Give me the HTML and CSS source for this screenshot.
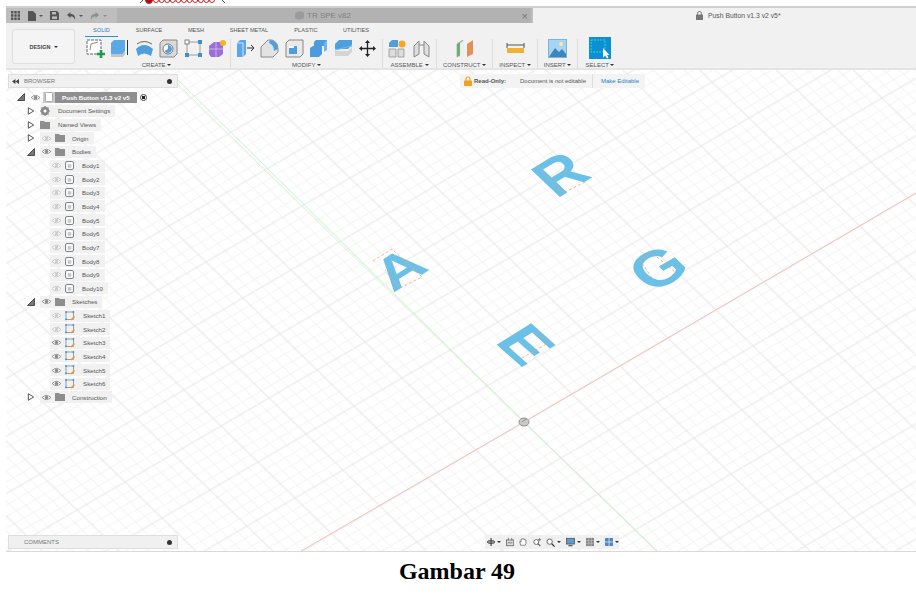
FILE: index.html
```html
<!DOCTYPE html>
<html lang="id">
<head>
<meta charset="utf-8">
<title>Gambar 49</title>
<link rel="stylesheet" href="styles.css">
</head>
<body>
<svg width="0" height="0" class="defs">
  <symbol id="eye" viewBox="0 0 12 8"><path d="M1 4Q6 -1 11 4Q6 9 1 4Z" fill="#fff" stroke="#8a8a8a" stroke-width="1"/><circle cx="6" cy="4" r="2" fill="#8a8a8a"/></symbol>
  <symbol id="eyeoff" viewBox="0 0 12 8"><path d="M1 4Q6 -1 11 4Q6 9 1 4Z" fill="#fff" stroke="#c4c4c4" stroke-width="1"/><circle cx="6" cy="4" r="2" fill="#cfcfcf"/><path d="M4 7L8 1" stroke="#c4c4c4" stroke-width=".8"/></symbol>
  <symbol id="folder" viewBox="0 0 10 8"><path d="M0 0H4L5 1H10V8H0Z" fill="#8e8e8e"/></symbol>
  <symbol id="body" viewBox="0 0 10 10"><rect x=".6" y=".6" width="8.8" height="8.8" rx="1.5" fill="#fff" stroke="#6d7075"/><rect x="3" y="3.5" width="4" height="4" fill="#c3c9cf"/></symbol>
  <symbol id="sketch" viewBox="0 0 10 10"><rect x="1" y="1" width="7.5" height="7.5" fill="none" stroke="#6f7c8a" stroke-width=".7"/><rect x=".2" y=".2" width="1.6" height="1.6" fill="#3e8ed0"/><rect x="7.6" y=".2" width="1.6" height="1.6" fill="#3e8ed0"/><rect x=".2" y="7.6" width="1.6" height="1.6" fill="#3e8ed0"/><path d="M6 9L9.5 5.5" stroke="#ef9a2e" stroke-width="1.4"/></symbol>
  <symbol id="tri" viewBox="0 0 8 9"><path d="M1 .8L7 4.5L1 8.2Z" fill="#fff" stroke="#444" stroke-width="1"/></symbol>
  <symbol id="triopen" viewBox="0 0 8 8"><path d="M7.5 .5V7.5H.5Z" fill="#777" stroke="#333" stroke-width=".8"/></symbol>
</svg>

<div class="scrap"><svg width="100" height="5" viewBox="0 0 100 5"><g fill="none" stroke="#c22" stroke-width="1"><path d="M13 0L10 3M92 0L95 3" stroke="#555"/><circle cx="19" cy="0" r="3.500" fill="#a11"/><circle cx="26" cy="0" r="2.500"/><circle cx="31.600" cy="0" r="2.500"/><circle cx="37.200" cy="0" r="2.500"/><circle cx="42.800" cy="0" r="2.500"/><circle cx="48.400" cy="0" r="2.500"/><circle cx="54" cy="0" r="2.500"/><circle cx="59.600" cy="0" r="2.500"/><circle cx="65.200" cy="0" r="2.500"/><circle cx="70.800" cy="0" r="2.500"/><circle cx="76.400" cy="0" r="2.500"/><circle cx="82" cy="0" r="2.500"/></g></svg></div>

<main class="app">
  <header class="tabbar">
    <div class="quick">
      <svg class="q" width="9" height="9" viewBox="0 0 9 9"><path d="M0 0h2.4v2.4H0zM3.3 0h2.4v2.4H3.3zM6.6 0H9v2.4H6.6zM0 3.3h2.4v2.4H0zM3.3 3.3h2.4v2.4H3.3zM6.6 3.3H9v2.4H6.6zM0 6.6h2.4V9H0zM3.3 6.6h2.4V9H3.3zM6.6 6.6H9V9H6.6z" fill="#555"/></svg>
      <svg class="q" width="16" height="10" viewBox="0 0 16 10"><path d="M1 0H6L9 3V10H1Z" fill="#555"/><path d="M12 4H16L14 6Z" fill="#555"/></svg>
      <svg class="q" width="9" height="9" viewBox="0 0 9 9"><path d="M0 0H7L9 2V9H0Z" fill="#555"/><rect x="2" y="1" width="4" height="2.4" fill="#bbb"/><rect x="2" y="5.4" width="5" height="2.6" fill="#bbb"/></svg>
      <svg class="q" width="17" height="10" viewBox="0 0 17 10"><path d="M1 4L4.5 1V3C8 3 9.500 5 9 9C8 6 7 5.200 4.500 5.200V7Z" fill="#555"/><path d="M13 4H17L15 6Z" fill="#555"/></svg>
      <svg class="q" width="17" height="10" viewBox="0 0 17 10"><path d="M9 4L5.500 1V3C2 3 .5 5 1 9C2 6 3 5.200 5.500 5.200V7Z" fill="#8c8c8c"/><path d="M13 4H17L15 6Z" fill="#8c8c8c"/></svg>
    </div>
    <div class="doc-tab">
      <svg width="9" height="9" viewBox="0 0 9 9"><path d="M0 2L5 0L9 1.500V7L4 9L0 7Z" fill="#9b9b9b"/></svg>
      <span class="doc-name">TR SPE v82</span>
      <span class="doc-close">×</span>
    </div>
    <div class="active-tab">
      <svg width="7" height="9" viewBox="0 0 7 9"><path d="M1.500 4V2.500A2 2 0 0 1 5.500 2.500V4" fill="none" stroke="#777"/><rect y="3.600" width="7" height="5.400" rx=".6" fill="#777"/></svg>
      <span>Push Button v1.3 v2 v5*</span>
    </div>
  </header>

  <section class="toolbar">
    <div class="design">DESIGN <i class="caret"></i></div>
    <div class="tools">
      <nav class="tabs">
        <span class="tab tab-solid">SOLID</span>
        <span class="tab tab-surface">SURFACE</span>
        <span class="tab tab-mesh">MESH</span>
        <span class="tab tab-sheet">SHEET METAL</span>
        <span class="tab tab-plastic">PLASTIC</span>
        <span class="tab tab-util">UTILITIES</span>
      </nav>
      <div class="groups">
        <div class="group g-create">
          <div class="icons">
            <svg width="19" height="19" viewBox="0 0 19 19"><rect x="1" y="1" width="14" height="14" fill="#fff" stroke="#666" stroke-dasharray="3 1"/><path d="M4 11L5 5L12 3" fill="none" stroke="#888"/><path d="M11 15H19M15 11V19" stroke="#1b9e4b" stroke-width="2.600"/></svg>
            <svg width="19" height="19" viewBox="0 0 19 19"><path d="M1 4L4 1H15V15L12 18H1Z" fill="#5aa9e6"/><path d="M1 15H12L15 12V15L12 18H1Z" fill="#c4c4c4"/><path d="M17.500 1V16" stroke="#333"/></svg>
            <svg width="19" height="19" viewBox="0 0 19 19"><path d="M1 10Q9 2 18 10L16 17Q9 12 3 17Z" fill="#4f9fdf"/><path d="M2 5Q9 0 17 5" fill="none" stroke="#666"/></svg>
            <svg width="19" height="19" viewBox="0 0 19 19"><path d="M1 4L4 1H18V15L15 18H1Z" fill="#d9d9d9" stroke="#888"/><circle cx="9" cy="10" r="5" fill="#fff" stroke="#777"/><path d="M9 10V6A4 4 0 1 1 5.500 12Z" fill="#4f9fdf"/></svg>
            <svg width="19" height="19" viewBox="0 0 19 19"><path d="M3 3H16M3 3V16M16 3V16M3 16H16" stroke="#777" stroke-width=".7"/><rect x="1" y="1" width="4" height="4" fill="#fff" stroke="#666" stroke-width=".8"/><rect x="14" y="1" width="4" height="4" fill="#3e8ed0"/><rect x="1" y="14" width="4" height="4" fill="#3e8ed0"/><rect x="14" y="14" width="4" height="4" fill="#3e8ed0"/></svg>
            <svg width="19" height="19" viewBox="0 0 19 19"><path d="M1 7L6 3H15V15L11 18H3L1 15Z" fill="#9a6fd8"/><path d="M8 3V18M1 10H15" stroke="#c9b2ee"/><circle cx="15" cy="4" r="3" fill="#f5b324"/></svg>
          </div>
          <div class="label">CREATE <i class="caret"></i></div>
        </div>
        <div class="group g-modify">
          <div class="icons">
            <svg width="19" height="19" viewBox="0 0 19 19"><path d="M1 4L4 1H10V15L7 18H1Z" fill="#5aa9e6"/><path d="M1 4H7V18" fill="none" stroke="#dde" /><path d="M11 9H18M15 6L18 9L15 12" fill="none" stroke="#333"/></svg>
            <svg width="19" height="19" viewBox="0 0 19 19"><path d="M1 8L8 1H12Q18 3 18 10V13L13 18H1Z" fill="#e3e3e3" stroke="#8a8a8a"/><path d="M10 1Q18 2 18 10L14 12Q14 6 9 4Z" fill="#4f9fdf"/></svg>
            <svg width="19" height="19" viewBox="0 0 19 19"><path d="M1 4L4 1H18V15L15 18H1Z" fill="#e9e9e9" stroke="#888"/><path d="M4 7H12V15H4Z" fill="#fff"/><path d="M4 9H9V7H12V15H4Z" fill="#4f9fdf"/></svg>
            <svg width="19" height="19" viewBox="0 0 19 19"><path d="M7 1H18V11L15 13V7H7Z" fill="#6eb6ee"/><path d="M1 9L4 7H13V15L10 18H1Z" fill="#4a9be0"/><path d="M7 1L5 3V7H15V4L18 1Z" fill="#4a9be0"/></svg>
            <svg width="19" height="19" viewBox="0 0 19 19"><path d="M1 5L5 1H18V6L14 10H1Z" fill="#4f9fdf"/><path d="M1 11L18 7" stroke="#6eb6ee"/><path d="M1 12H14L18 8V13L14 17H1Z" fill="#d5d5d5"/></svg>
            <svg width="19" height="19" viewBox="0 0 19 19"><path d="M9.500 1L7 4H12ZM9.500 18L7 15H12ZM1 9.500L4 7V12ZM18 9.500L15 7V12Z" fill="#222"/><path d="M9.500 3V16M3 9.500H16" stroke="#222" stroke-width="1.300"/></svg>
          </div>
          <div class="label">MODIFY <i class="caret"></i></div>
        </div>
        <div class="group g-assemble">
          <div class="icons">
            <svg width="19" height="19" viewBox="0 0 19 19"><path d="M1 4L4 1H10V8H1Z" fill="#4f9fdf"/><path d="M1 10H8V18H1ZM10 10H16V18H10Z" fill="#dcdcdc" stroke="#888" stroke-width=".7"/><circle cx="14" cy="5" r="3.500" fill="#f5a623"/></svg>
            <svg width="19" height="19" viewBox="0 0 19 19"><path d="M2 7L7 2V15L2 18ZM12 2L17 7V18L12 15Z" fill="#dedede" stroke="#888"/><path d="M7 6H12" stroke="#888"/></svg>
          </div>
          <div class="label">ASSEMBLE <i class="caret"></i></div>
        </div>
        <div class="group g-construct">
          <div class="icons">
            <svg width="19" height="19" viewBox="0 0 19 19"><path d="M2 5L8 1V15L2 18Z" fill="#63b56e" stroke="#999" stroke-width=".6"/><path d="M5 4L9 1V18L5 18Z" fill="#eee"/><path d="M12 5L18 1V15L12 18Z" fill="#e4905a"/></svg>
          </div>
          <div class="label">CONSTRUCT <i class="caret"></i></div>
        </div>
        <div class="group g-inspect">
          <div class="icons">
            <svg width="19" height="19" viewBox="0 0 19 19"><rect x="1" y="9" width="17" height="5" fill="#f2b134"/><path d="M1 4V9M18 4V9M1 6H18" stroke="#555"/></svg>
          </div>
          <div class="label">INSPECT <i class="caret"></i></div>
        </div>
        <div class="group g-insert">
          <div class="icons">
            <svg width="19" height="19" viewBox="0 0 19 19"><rect x=".5" y=".5" width="18" height="18" fill="#a6d4f5" stroke="#7fb2d8"/><path d="M1 18L7 9L11 13L14 10L18 15V18Z" fill="#3d85bd"/><circle cx="13" cy="5" r="2" fill="#fbe9a0"/></svg>
          </div>
          <div class="label">INSERT <i class="caret"></i></div>
        </div>
        <div class="group g-select">
          <div class="icons">
            <svg width="22" height="22" viewBox="0 0 22 22"><rect width="22" height="22" fill="#0b8fd6"/><rect x="2" y="3" width="14" height="12" fill="none" stroke="#3fd0b5" stroke-dasharray="2 1"/><path d="M14 11V21L16 18.500L18 21.500L19.500 20.500L18 18H20.500Z" fill="#fff"/></svg>
          </div>
          <div class="label">SELECT <i class="caret"></i></div>
        </div>
      </div>
    </div>
  </section>

  <section class="canvas">
    <svg class="grid" viewBox="6 70 910 481" preserveAspectRatio="none">
      <defs>
        <pattern id="floor" patternUnits="userSpaceOnUse" width="48" height="48" patternTransform="matrix(1 -.5833 .7708 .75 524 422)">
          <path class="minor" d="M9.600 0V48M19.200 0V48M28.800 0V48M38.400 0V48M0 9.600H48M0 19.200H48M0 28.800H48M0 38.400H48"/>
          <path class="major" d="M0 0V48M48 0V48M0 0H48M0 48H48"/>
        </pattern>
      </defs>
      <rect class="floor" x="6" y="70" width="910" height="481"/>
      <path class="axis-r" d="M301 551L524 422L916 193"/>
      <path class="axis-g" d="M178 80L524 422L657 551"/>
      <g class="letters">
        <text class="glyph" transform="matrix(.52 -.33 .35 .36 393 293)">A</text>
        <text class="glyph" transform="matrix(.51 -.31 .42 .40 556.500 199)">R</text>
        <text class="glyph" transform="matrix(.53 -.31 .42 .40 652 294)">G</text>
        <text class="glyph" transform="matrix(.45 .40 -.50 .31 493.700 342.100)">E</text>
      </g>
      <g class="sketchlines">
        <path d="M373 261L392 249L422 277L400 288L385 270"/>
        <path d="M537 165L563 193L585 182"/>
        <path d="M640 260L652 253L675 272M652 278L640 260"/>
        <path d="M522 358L550 342L533 332"/>
      </g>
      <path class="origin" d="M519 422a5 4 0 1 0 10 0a5 4 0 1 0-10 0M522 422l4-3"/>
    </svg>

    <aside class="browser">
      <div class="panel-head">
        <svg width="7" height="5" viewBox="0 0 7 5"><path d="M3.500 0V5L0 2.500ZM7 0V5L3.500 2.500Z" fill="#444"/></svg>
        <span class="panel-title">BROWSER</span>
        <i class="pin"></i>
      </div>
      <div class="tree">
        <div class="row lv0">
          <svg class="arrow" width="8" height="8"><use href="#triopen"/></svg>
          <svg class="eye" width="11" height="7"><use href="#eye"/></svg>
          <div class="root-pill"><span class="root-ic"><svg width="8" height="10" viewBox="0 0 8 10"><rect x=".5" y=".5" width="7" height="9" rx="1" fill="#fff" stroke="#aaa"/></svg></span><span class="root-name">Push Button v1.3 v2 v5</span></div>
          <span class="radio"></span>
        </div>
        <div class="row lv1"><svg class="arrow" width="7" height="8"><use href="#tri"/></svg><div class="pill"><svg class="solo" width="10" height="10" viewBox="0 0 10 10"><circle cx="5" cy="5" r="3.200" fill="none" stroke="#888" stroke-width="2"/><path d="M5 0V10M0 5H10M1.500 1.500L8.500 8.500M8.500 1.500L1.500 8.500" stroke="#888" stroke-width="1.200"/><circle cx="5" cy="5" r="1.500" fill="#fff"/></svg><span class="name">Document Settings</span></div></div>
        <div class="row lv1"><svg class="arrow" width="7" height="8"><use href="#tri"/></svg><div class="pill"><svg class="solo" width="10" height="8"><use href="#folder"/></svg><span class="name">Named Views</span></div></div>
        <div class="row lv1"><svg class="arrow" width="7" height="8"><use href="#tri"/></svg><div class="pill"><svg class="eye" width="11" height="7"><use href="#eyeoff"/></svg><svg class="ico" width="10" height="8"><use href="#folder"/></svg><span class="name">Origin</span></div></div>
        <div class="row lv1"><svg class="arrow" width="8" height="8"><use href="#triopen"/></svg><div class="pill"><svg class="eye" width="11" height="7"><use href="#eye"/></svg><svg class="ico" width="10" height="8"><use href="#folder"/></svg><span class="name">Bodies</span></div></div>
        <div class="row lv2"><div class="pill"><svg class="eye" width="11" height="7"><use href="#eyeoff"/></svg><svg class="ico" width="9" height="9"><use href="#body"/></svg><span class="name">Body1</span></div></div>
        <div class="row lv2"><div class="pill"><svg class="eye" width="11" height="7"><use href="#eyeoff"/></svg><svg class="ico" width="9" height="9"><use href="#body"/></svg><span class="name">Body2</span></div></div>
        <div class="row lv2"><div class="pill"><svg class="eye" width="11" height="7"><use href="#eyeoff"/></svg><svg class="ico" width="9" height="9"><use href="#body"/></svg><span class="name">Body3</span></div></div>
        <div class="row lv2"><div class="pill"><svg class="eye" width="11" height="7"><use href="#eyeoff"/></svg><svg class="ico" width="9" height="9"><use href="#body"/></svg><span class="name">Body4</span></div></div>
        <div class="row lv2"><div class="pill"><svg class="eye" width="11" height="7"><use href="#eyeoff"/></svg><svg class="ico" width="9" height="9"><use href="#body"/></svg><span class="name">Body5</span></div></div>
        <div class="row lv2"><div class="pill"><svg class="eye" width="11" height="7"><use href="#eyeoff"/></svg><svg class="ico" width="9" height="9"><use href="#body"/></svg><span class="name">Body6</span></div></div>
        <div class="row lv2"><div class="pill"><svg class="eye" width="11" height="7"><use href="#eyeoff"/></svg><svg class="ico" width="9" height="9"><use href="#body"/></svg><span class="name">Body7</span></div></div>
        <div class="row lv2"><div class="pill"><svg class="eye" width="11" height="7"><use href="#eyeoff"/></svg><svg class="ico" width="9" height="9"><use href="#body"/></svg><span class="name">Body8</span></div></div>
        <div class="row lv2"><div class="pill"><svg class="eye" width="11" height="7"><use href="#eyeoff"/></svg><svg class="ico" width="9" height="9"><use href="#body"/></svg><span class="name">Body9</span></div></div>
        <div class="row lv2"><div class="pill"><svg class="eye" width="11" height="7"><use href="#eyeoff"/></svg><svg class="ico" width="9" height="9"><use href="#body"/></svg><span class="name">Body10</span></div></div>
        <div class="row lv1"><svg class="arrow" width="8" height="8"><use href="#triopen"/></svg><div class="pill"><svg class="eye" width="11" height="7"><use href="#eye"/></svg><svg class="ico" width="10" height="8"><use href="#folder"/></svg><span class="name">Sketches</span></div></div>
        <div class="row lv2"><div class="pill"><svg class="eye" width="11" height="7"><use href="#eyeoff"/></svg><svg class="ico" width="10" height="10"><use href="#sketch"/></svg><span class="name">Sketch1</span></div></div>
        <div class="row lv2"><div class="pill"><svg class="eye" width="11" height="7"><use href="#eyeoff"/></svg><svg class="ico" width="10" height="10"><use href="#sketch"/></svg><span class="name">Sketch2</span></div></div>
        <div class="row lv2"><div class="pill"><svg class="eye" width="11" height="7"><use href="#eye"/></svg><svg class="ico" width="10" height="10"><use href="#sketch"/></svg><span class="name">Sketch3</span></div></div>
        <div class="row lv2"><div class="pill"><svg class="eye" width="11" height="7"><use href="#eye"/></svg><svg class="ico" width="10" height="10"><use href="#sketch"/></svg><span class="name">Sketch4</span></div></div>
        <div class="row lv2"><div class="pill"><svg class="eye" width="11" height="7"><use href="#eye"/></svg><svg class="ico" width="10" height="10"><use href="#sketch"/></svg><span class="name">Sketch5</span></div></div>
        <div class="row lv2"><div class="pill"><svg class="eye" width="11" height="7"><use href="#eye"/></svg><svg class="ico" width="10" height="10"><use href="#sketch"/></svg><span class="name">Sketch6</span></div></div>
        <div class="row lv1"><svg class="arrow" width="7" height="8"><use href="#tri"/></svg><div class="pill"><svg class="eye" width="11" height="7"><use href="#eye"/></svg><svg class="ico" width="10" height="8"><use href="#folder"/></svg><span class="name">Construction</span></div></div>
      </div>
    </aside>

    <div class="readonly">
      <svg width="8" height="10" viewBox="0 0 8 10"><path d="M2 5V3A2 2 0 0 1 6 3V5" fill="none" stroke="#f0a020" stroke-width="1.200"/><rect y="4.500" width="8" height="5.500" rx=".8" fill="#f0a020"/></svg>
      <b class="ro-title">Read-Only:</b>
      <span class="ro-msg">Document is not editable</span>
      <span class="ro-link">Make Editable</span>
    </div>

    <div class="comments">
      <span class="panel-title">COMMENTS</span>
      <i class="pin"></i>
    </div>

    <div class="navbar">
      <svg width="10" height="10" viewBox="0 0 10 10"><path d="M5 0V10M0 5H10" stroke="#444" stroke-width="1.400"/><ellipse cx="5" cy="5" rx="4.500" ry="2" fill="none" stroke="#444"/></svg><i class="caret"></i>
      <svg class="gap" width="10" height="10" viewBox="0 0 10 10"><rect x=".5" y="2.500" width="9" height="7" fill="#ddd" stroke="#666"/><path d="M3 0V3M7 0V3M2 6H8" stroke="#666"/></svg>
      <svg class="gap" width="10" height="10" viewBox="0 0 10 10"><path d="M2 9L1 5V4L2.500 5V1.500H4V1H5.500V1.500H7V2.500H8.500V7L7.500 9Z" fill="#fff" stroke="#555" stroke-width=".8"/></svg>
      <svg class="gap" width="10" height="10" viewBox="0 0 10 10"><circle cx="4" cy="5" r="3" fill="#fff" stroke="#555"/><path d="M6 7L9 10" stroke="#555" stroke-width="1.400"/><path d="M8 0V4M6 2H10" stroke="#777"/></svg>
      <svg class="gap" width="11" height="11" viewBox="0 0 11 11"><rect width="9" height="9" fill="#e6e6e6"/><circle cx="4.500" cy="4.500" r="3.200" fill="#fff" stroke="#555"/><path d="M7 7L10.500 10.500" stroke="#333" stroke-width="1.500"/></svg><i class="caret"></i>
      <svg class="gap" width="11" height="10" viewBox="0 0 11 10"><rect x=".5" y=".5" width="10" height="7" fill="#5b9bd5" stroke="#555"/><path d="M3 9.500H8" stroke="#555" stroke-width="1.500"/></svg><i class="caret"></i>
      <svg class="gap" width="10" height="10" viewBox="0 0 10 10"><rect width="10" height="10" fill="#888"/><path d="M3.300 0V10M6.600 0V10M0 3.300H10M0 6.600H10" stroke="#ccc" stroke-width=".6"/></svg><i class="caret"></i>
      <svg class="gap" width="10" height="10" viewBox="0 0 10 10"><rect width="10" height="10" rx="1" fill="#4f86c6"/><path d="M5 0V10M0 5H10" stroke="#dfe9f5"/></svg><i class="caret"></i>
    </div>
  </section>
</main>

<footer class="caption">Gambar 49</footer>
</body>
</html>
```

FILE: styles.css
```css
* { box-sizing: border-box; }
html, body { margin: 0; padding: 0; background: #fff; }
body { width: 916px; height: 594px; overflow: hidden; font-family: "Liberation Sans", Arial, sans-serif; position: relative; }
.defs { position: absolute; }
.scrap { position: absolute; left: 130px; top: 0; line-height: 0; }

.app { margin: 6px 0 0 6px; height: 546px; display: flex; flex-direction: column; border-bottom: 1px solid #d9d9d9; }

.tabbar { height: 17px; display: flex; border-top: 2px solid #cfcfcf; flex: none; background: #bdbdbd; }
.quick { width: 111px; display: flex; align-items: center; padding-left: 5px; gap: 7px; flex: none; }
.quick .q { flex: none; }
.doc-tab { width: 414px; background: #b2b2b2; display: flex; align-items: center; padding-left: 178px; gap: 3px; color: #808080; font-size: 8px; border-bottom-right-radius: 3px; flex: none; }
.doc-name { flex: 1; }
.doc-close { color: #777; font-size: 11px; margin-right: 3px; }
.active-tab { flex: 1; background: #f1f1f1; margin-left: 2px; display: flex; align-items: center; padding-left: 163px; gap: 5px; font-size: 6.800px; color: #555; }

.toolbar { height: 47px; flex: none; background: #f1f1f1; border-bottom: 2px solid #e4e4e4; display: flex; padding-left: 6px; }
.design { width: 63px; height: 35px; margin-top: 6px; border: 1px solid #dedede; border-radius: 3px; background: #f4f4f4; display: flex; align-items: center; justify-content: center; gap: 3px; font-size: 5.500px; font-weight: bold; color: #444; }
.caret { display: inline-block; width: 0; height: 0; border-left: 2px solid transparent; border-right: 2px solid transparent; border-top: 2px solid #333; vertical-align: middle; }
.tools { margin-left: 8px; flex: 1; }
.tabs { height: 16px; font-size: 5.600px; color: #555; display: flex; padding-left: 2px; }
.tab { display: block; padding-top: 4px; text-align: center; flex: none; }
.tab-solid { width: 33px; height: 14px; margin-right: 14px; color: #2a7fc0; border-bottom: 1px solid #2a90d9; }
.tab-surface { width: 34px; margin-right: 18px; }
.tab-mesh { width: 24px; margin-right: 16px; }
.tab-sheet { width: 50px; margin-right: 15px; }
.tab-plastic { width: 34px; margin-right: 15px; }
.tab-util { width: 36px; }

.groups { display: flex; height: 29px; }
.group { display: flex; flex-direction: column; align-items: center; border-right: 1px solid #dcdcdc; height: 29px; flex: none; }
.group:last-child { border-right: 0; }
.icons { display: flex; gap: 5.500px; height: 20px; align-items: flex-start; flex: none; }
.label { font-size: 6px; color: #555; margin-top: 3px; white-space: nowrap; }
.g-create { width: 148px; }
.g-modify { width: 152px; }
.g-assemble { width: 54px; }
.g-construct { width: 56px; }
.g-inspect { width: 45px; }
.g-insert { width: 40px; }
.g-select { width: 44px; }
.g-select .icons { margin-top: -2px; height: 22px; }

.canvas { position: relative; flex: 1; background: #fff; overflow: hidden; }
.grid { position: absolute; left: 0; top: 0; width: 910px; height: 481px; }
.floor { fill: url(#floor); }
.minor { stroke: #f3f3f3; stroke-width: .8; fill: none; }
.major { stroke: #e2e2e2; stroke-width: .8; fill: none; }
.axis-r { stroke: #fbbcbc; stroke-width: 1; fill: none; }
.axis-g { stroke: #c4f5c4; stroke-width: 1; fill: none; }
.glyph { font-family: "Liberation Sans", Arial, sans-serif; font-size: 100px; font-weight: 700; fill: #6bc0e8; }
.sketchlines path { fill: none; stroke: #eda46f; stroke-width: .8; stroke-dasharray: 3 2; }
.origin { fill: #c9c9c9; stroke: #8d8d8d; stroke-width: 1; }

.browser { position: absolute; left: 2px; top: 4px; width: 170px; }
.panel-head, .comments { height: 14px; background: #f0f0f0; border: 1px solid #dedede; display: flex; align-items: center; padding-left: 3px; font-size: 6px; color: #777; }
.panel-title { flex: 1; padding-left: 5px; }
.comments { position: absolute; left: 2px; top: 465px; width: 170px; padding-left: 10px; }
.pin { width: 5px; height: 5px; border-radius: 50%; background: #333; margin-right: 5px; flex: none; }
.tree { padding-top: 2.500px; font-size: 6.200px; color: #555; }
.row { display: flex; align-items: center; height: 13.650px; white-space: nowrap; }
.lv0 { padding-left: 9px; }
.lv0 .arrow { margin-right: 4px; flex: none; }
.lv0 .eye { margin-right: 2px; }
.lv1 { padding-left: 19px; }
.lv1 .arrow { width: 8px; margin-right: 5px; }
.lv2 { padding-left: 42px; }
.pill { display: flex; align-items: center; height: 12px; background: #f1f1f1; padding: 0 5px 0 0; }
.eye { margin-left: 1px; flex: none; }
.ico { margin-left: 3px; flex: none; }
.solo { flex: none; }
.name { margin-left: 7px; }
.lv2 .name { margin-left: 8px; }
.solo + .name { margin-left: 8px; }
.root-pill { display: flex; align-items: center; height: 11px; background: #8f8f8f; flex: none; }
.root-ic { width: 12px; height: 11px; background: #c9c9c9; display: flex; align-items: center; justify-content: center; }
.root-name { color: #fff; font-weight: bold; padding: 0 5px 0 7px; width: 82px; overflow: hidden; }
.radio { width: 7px; height: 7px; border: 1px solid #444; border-radius: 50%; margin-left: 3px; background: radial-gradient(circle, #222 0 1.500px, #fff 2px); }

.readonly { position: absolute; left: 454px; top: 4px; width: 185px; height: 14px; background: #f3f3f3; display: flex; align-items: center; padding-left: 4px; font-size: 6px; color: #555; }
.ro-title { margin-left: 2px; color: #555; width: 40px; }
.ro-msg { width: 79px; padding-left: 6px; border-right: 1px solid #ddd; line-height: 14px; }
.ro-link { color: #2a7fc0; padding-left: 8px; }

.navbar { position: absolute; left: 479px; top: 465px; width: 134px; height: 14px; background: #f0f0f0; display: flex; align-items: center; padding-left: 2px; gap: 2px; }
.navbar .gap { margin-left: 3px; }

.caption { position: absolute; left: 0; top: 556px; width: 914px; text-align: center; font-family: "Liberation Serif", "Times New Roman", serif; font-weight: bold; font-size: 24px; line-height: 30px; color: #000; }
```
